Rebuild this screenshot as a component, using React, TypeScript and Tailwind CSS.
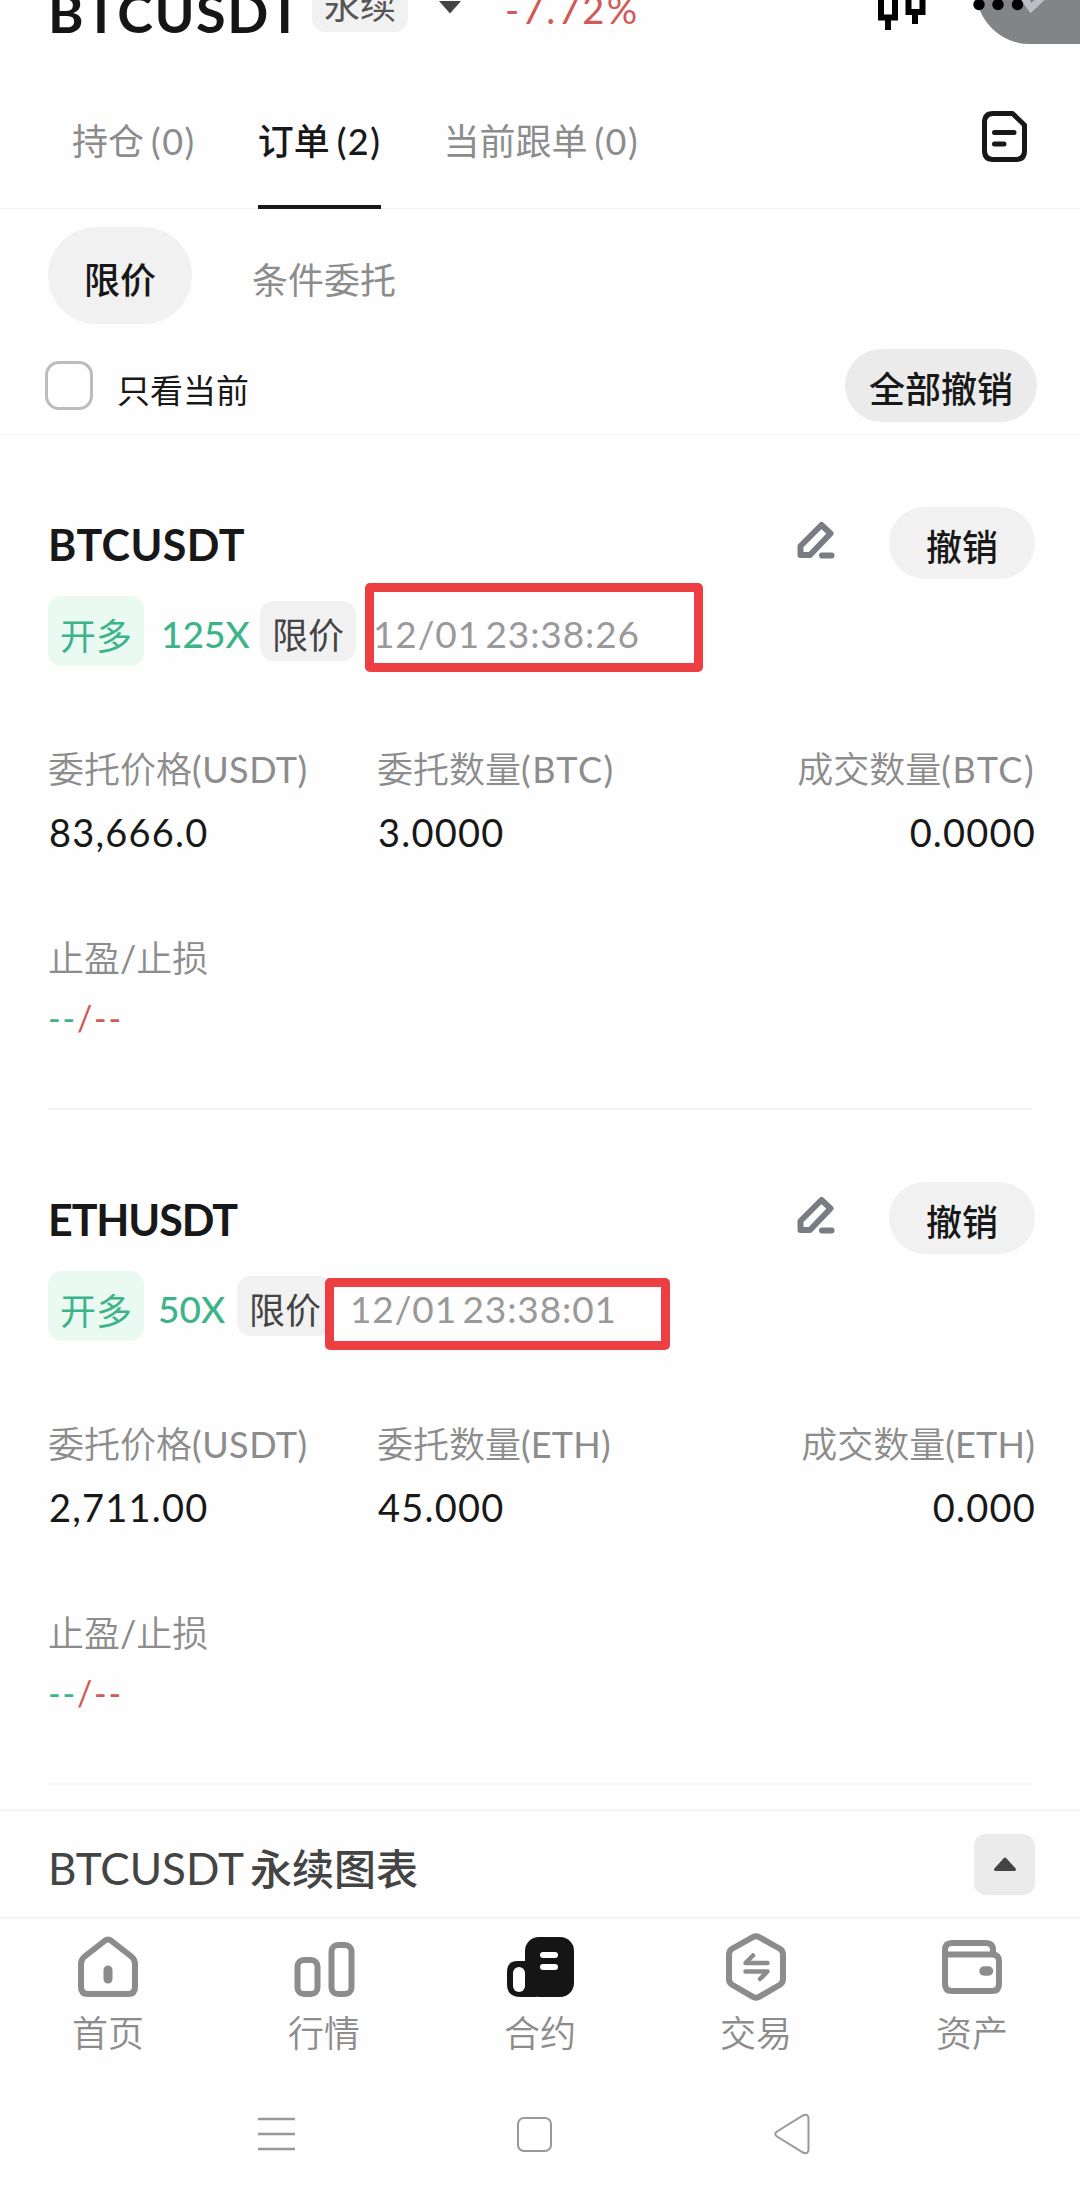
import { useState } from 'react';
import type { ReactNode } from 'react';

interface Order {
  symbol: string;
  leverage: string;
  time: string;
  coin: string;
  price: string;
  amount: string;
  filled: string;
  symbolClass: string;
  leverageClass: string;
  coinClass: string;
  markClass: string;
}

const orders: Order[] = [
  {
    symbol: 'BTCUSDT',
    leverage: '125X',
    time: '12/01 23:38:26',
    coin: 'BTC',
    price: '83,666.0',
    amount: '3.0000',
    filled: '0.0000',
    symbolClass: 'tracking-[0.4px]',
    leverageClass: 'ml-[17px] w-[99px]',
    coinClass: 'tracking-[1.5px]',
    markClass: 'left-[317px] top-[-13px] w-[338px] h-[89px]',
  },
  {
    symbol: 'ETHUSDT',
    leverage: '50X',
    time: '12/01 23:38:01',
    coin: 'ETH',
    price: '2,711.00',
    amount: '45.000',
    filled: '0.000',
    symbolClass: 'tracking-[-1.1px]',
    leverageClass: 'ml-[14px] w-[79px]',
    coinClass: 'tracking-[0.2px]',
    markClass: 'left-[277px] top-[7px] w-[345px] h-[72px]',
  },
];

const PencilIcon = () => (
  <svg width="38" height="38" viewBox="0 0 38 38" fill="none" stroke="#7b7c83" strokeWidth="6" strokeLinejoin="round">
    <path d="M3.500 25 24.500 4 33.500 12.500 13 34H3.500Z" />
    <path d="M25 34.500H34.500" strokeLinecap="round" />
  </svg>
);

const DocIcon = () => (
  <svg width="45" height="51" viewBox="0 0 45 51" fill="none" stroke="#181818" strokeWidth="5" strokeLinejoin="round" strokeLinecap="round">
    <path d="M11 2.500H30.500L42.500 14V39.500Q42.500 48.500 34 48.500H11Q2.500 48.500 2.500 39.500V11.500Q2.500 2.500 11 2.500Z" />
    <path d="M12.500 21.500H32M12.500 33H22" />
  </svg>
);

const HomeIcon = () => (
  <svg width="62" height="68" viewBox="0 0 62 68" fill="none" stroke="#8c8c8c" strokeWidth="6" strokeLinejoin="round">
    <path d="M27.500 8Q31 5 34.500 8L55 24Q58 27 58 31V54Q58 61 51 61H11Q4 61 4 54V31Q4 27 7 24Z" />
    <path d="M31 37V46" strokeWidth="9" strokeLinecap="round" />
  </svg>
);

const MarketIcon = () => (
  <svg width="62" height="68" viewBox="0 0 62 68" fill="none" stroke="#8c8c8c" strokeWidth="6">
    <rect x="4.500" y="27" width="20" height="34" rx="6.500" />
    <rect x="38.500" y="12" width="20" height="49" rx="6.500" />
  </svg>
);

const ContractIcon = () => (
  <svg width="68" height="68" viewBox="0 0 68 68" fill="#151515">
    <rect x="19" y="4" width="49" height="60" rx="14" />
    <path d="M12 28H30V64H14Q1 64 1 51V39Q1 28 12 28Z" />
    <rect x="7" y="34" width="12" height="25" rx="6" fill="#fff" />
    <rect x="34" y="19" width="18" height="6" rx="3" fill="#fff" />
    <rect x="34" y="31" width="18" height="6" rx="3" fill="#fff" />
  </svg>
);

const TradeIcon = () => (
  <svg width="62" height="68" viewBox="0 0 62 68" fill="none" stroke="#8c8c8c" strokeWidth="6" strokeLinejoin="round">
    <path d="M27.500 4.300Q31 2.300 34.500 4.300L54.500 15.500Q58 17.500 58 21.500V46Q58 50 54.500 52L34.500 63.700Q31 65.700 27.500 63.700L7.500 52Q4 50 4 46V21.500Q4 17.500 7.500 15.500Z" />
    <path d="M42.500 30H20.500L28 22.500M20.500 38.500H42.500L35 46" strokeWidth="4.500" strokeLinecap="round" />
  </svg>
);

const WalletIcon = () => (
  <svg width="62" height="68" viewBox="0 0 62 68" fill="none" stroke="#8c8c8c" strokeWidth="6" strokeLinejoin="round">
    <path d="M4 21.500V17Q4 10 11 10H45Q52 10 52 17V21.500" />
    <path d="M4 18V51Q4 58 11 58H51Q58 58 58 51V28Q58 21.500 51 21.500H4" />
    <path d="M43 38H47.500" strokeWidth="9.500" strokeLinecap="round" />
  </svg>
);

const navItems: { label: string; icon: ReactNode }[] = [
  { label: '首页', icon: <HomeIcon /> },
  { label: '行情', icon: <MarketIcon /> },
  { label: '合约', icon: <ContractIcon /> },
  { label: '交易', icon: <TradeIcon /> },
  { label: '资产', icon: <WalletIcon /> },
];

const tabs = [
  { label: '持仓', count: 0 },
  { label: '订单', count: 2 },
  { label: '当前跟单', count: 0 },
];

const Header = () => (
  <header className="relative h-14 overflow-hidden">
    <div className="flex items-start pl-12">
      <h1 className="-mt-[17px] w-[246px] whitespace-nowrap text-[54px] leading-[60px] font-bold tracking-[1.5px] text-[#151515]">BTCUSDT</h1>
      <span className="ml-[18px] -mt-[28px] h-[60px] w-[96px] rounded-[14px] bg-[#f1f1f1] text-center text-[36px] leading-[67px] text-[#555]">永续</span>
      <svg className="ml-[30px]" width="24" height="14" viewBox="0 0 24 14">
        <path d="M1 1H23L12 13.500Z" fill="#444" />
      </svg>
      <span className="ml-[43px] -mt-[16px] text-[38px] leading-[50px] tracking-[2.500px] text-[#cf5a58]">-7.72%</span>
    </div>

    {/* Floating capsule in the corner */}
    <div className="absolute right-0 -top-16 h-[108px] w-[104px] rounded-l-[54px] bg-[#828486]" />
    <svg className="absolute right-0 top-0" width="210" height="44" viewBox="0 0 210 44">
      <path d="M151 -6 161 8 176 -6" fill="none" stroke="#b9bfc5" strokeWidth="7" />
      <g fill="none" stroke="#000" strokeWidth="6">
        <path d="M11 -10V17.500H25V-10M38.500 -10V12H52.500V-10" />
        <path d="M18 17V30M45 12V24" />
      </g>
      <circle cx="109" cy="4.500" r="5.700" />
      <circle cx="128" cy="4.500" r="5.700" />
      <circle cx="147.500" cy="4.500" r="5.700" />
    </svg>
  </header>
);

const OrderCard = ({ order }: { order: Order }) => (
  <article className="mx-12 h-[675px] border-b-2 border-[#f5f5f5] pt-[72px]">
    <div className="flex h-[72px] items-center">
      <h2 className={`pt-1 text-[43px] leading-[60px] font-bold text-[#181818] ${order.symbolClass}`}>{order.symbol}</h2>
      <button className="mr-[54px] ml-auto pb-1.5">
        <PencilIcon />
      </button>
      <button className="-mr-[3px] h-[72px] w-[146px] rounded-full bg-[#f1f1f1] pt-2 text-[36px] leading-[64px] font-medium text-[#181818]">撤销</button>
    </div>

    <div className="relative mt-[17px] flex h-[70px] items-center text-[36px] whitespace-nowrap">
      <span className="h-[70px] w-24 rounded-[14px] bg-[#ebf9f3] text-center leading-[80px] text-[#3cb48a]">开多</span>
      <span className={`pt-1.5 text-[37px] leading-[62px] font-medium text-[#3cb48a] ${order.leverageClass}`}>{order.leverage}</span>
      <span className="h-[60px] w-24 rounded-[14px] bg-[#f1f1f1] text-center leading-[68px] text-[#444]">限价</span>
      <span className="ml-[17px] pt-1.5 text-[37px] leading-[62px] tracking-[0.900px] [word-spacing:-5px] text-[#999]">{order.time}</span>
      <div className={`absolute rounded-[5px] border-[9px] border-[#ed3f42] ${order.markClass}`} />
    </div>

    <div className="-mr-[3px] mt-[78px] grid grid-cols-[329px_1fr_1fr] gap-y-3.5 leading-[50px]">
      <span className="text-[36px] font-[350] text-[#8c8c8c]">
        委托价格<span className="font-normal tracking-[0.5px]">(USDT)</span>
      </span>
      <span className="text-[36px] font-[350] text-[#8c8c8c]">
        委托数量<span className={`font-normal ${order.coinClass}`}>({order.coin})</span>
      </span>
      <span className="text-right text-[36px] font-[350] text-[#8c8c8c]">
        成交数量<span className={`font-normal ${order.coinClass}`}>({order.coin})</span>
      </span>
      <span className="-mt-px pl-px text-[38px] tracking-[1.2px] text-[#181818]">{order.price}</span>
      <span className="-mt-px pl-px text-[38px] tracking-[1.2px] text-[#181818]">{order.amount}</span>
      <span className="-mt-px -mr-px text-right text-[38px] tracking-[1.2px] text-[#181818]">{order.filled}</span>
    </div>

    <div className="mt-[76px] text-[36px] leading-[50px] font-[350] text-[#8c8c8c]">
      止盈<span className="font-normal">/</span>止损
    </div>
    <div className="mt-2.5 text-[34px] leading-[50px] tracking-[1.8px] text-[#cf5a58]">
      <span className="text-[#3cb48a]">--</span>/--
    </div>
  </article>
);

const App = () => {
  const [activeTab, setActiveTab] = useState(1);
  const [onlyCurrent, setOnlyCurrent] = useState(false);

  return (
    <div className="flex h-[2200px] w-[1080px] flex-col overflow-hidden bg-[#fefefe] font-['Lato','Noto_Sans_CJK_SC',sans-serif]">
      <Header />

      {/* Tabs */}
      <div className="flex h-[153px] items-end border-b border-[#f3f3f3] pl-[72px]">
        <nav className="-mb-px flex gap-[62px]">
          {tabs.map((tab, i) => (
            <button
              key={tab.label}
              onClick={() => setActiveTab(i)}
              className={
                i === activeTab
                  ? 'border-b-4 border-[#181818] pb-[39px] text-[36px] leading-[50px] font-medium text-[#181818]'
                  : 'border-b-4 border-transparent pb-[39px] text-[36px] leading-[50px] text-[#8c8c8c]'
              }
            >
              {tab.label}
              <span className="ml-[7px] tracking-[1.5px]">({tab.count})</span>
            </button>
          ))}
        </nav>
        <button className="mr-[53px] mb-[46px] ml-auto">
          <DocIcon />
        </button>
      </div>

      {/* Filters */}
      <div className="h-[226px] border-b border-[#f5f5f5] pt-[18px] pr-[43px] pl-[45px]">
        <div className="ml-[3px] flex text-[36px] leading-[106px]">
          <button className="h-[97px] w-36 rounded-full bg-[#f1f1f1] font-medium text-[#181818]">限价</button>
          <button className="ml-[60px] h-[97px] text-[#8c8c8c]">条件委托</button>
        </div>
        <div className="mt-[25px] flex h-[73px] items-center">
          <button
            onClick={() => setOnlyCurrent(!onlyCurrent)}
            className="h-[49px] w-12 rounded-[14px] border-[3px] border-[#bcbcbc]"
          />
          <span className="ml-[24px] pt-2 text-[33px] leading-[50px] text-[#181818]">只看当前</span>
          <button className="ml-auto h-[73px] w-48 rounded-full bg-[#ebebeb] pt-2 text-[36px] leading-[65px] font-medium text-[#181818]">全部撤销</button>
        </div>
      </div>

      {orders.map((order) => (
        <OrderCard key={order.symbol} order={order} />
      ))}

      {/* Chart drawer */}
      <div className="mt-[24px] flex h-[110px] items-center border-y-2 border-[#f4f4f4] pr-[45px] pl-12">
        <span className="pt-2 text-[44px] leading-[60px] text-[#444]">
          BTCUSDT <span className="-ml-1 text-[42px] font-medium">永续图表</span>
        </span>
        <button className="ml-auto flex h-[61px] w-[61px] items-center justify-center rounded-xl bg-[#ebebeb]">
          <svg width="24" height="16" viewBox="0 0 24 16" fill="#444" stroke="#444" strokeWidth="3" strokeLinejoin="round">
            <path d="M2.500 13.500 12 3 21.500 13.500Z" />
          </svg>
        </button>
      </div>

      {/* Bottom navigation */}
      <nav className="grid grid-cols-5 pt-[14px]">
        {navItems.map((item) => (
          <button key={item.label} className="flex flex-col items-center text-[36px] leading-[50px] font-[350] text-[#8c8c8c]">
            {item.icon}
            <span className="mt-[7px]">{item.label}</span>
          </button>
        ))}
      </nav>

      {/* System bar */}
      <div className="mt-[55px] flex h-[42px] items-center pl-[258px]">
        <svg width="37" height="34" viewBox="0 0 37 34" stroke="#999" strokeWidth="2.500">
          <path d="M0 2H37M0 17H37M0 32H37" />
        </svg>
        <div className="ml-[222px] h-[35px] w-[35px] rounded-[7px] border-2 border-[#999]" />
        <svg className="ml-[222px]" width="36" height="42" viewBox="0 0 36 42" fill="none" stroke="#999" strokeWidth="2">
          <path d="M3 18.500 29 2.500Q34.500 0 34.500 6V36Q34.500 42 29 39.500L3 23.500Q-0.500 21 3 18.500Z" />
        </svg>
      </div>
    </div>
  );
};

export default App;
